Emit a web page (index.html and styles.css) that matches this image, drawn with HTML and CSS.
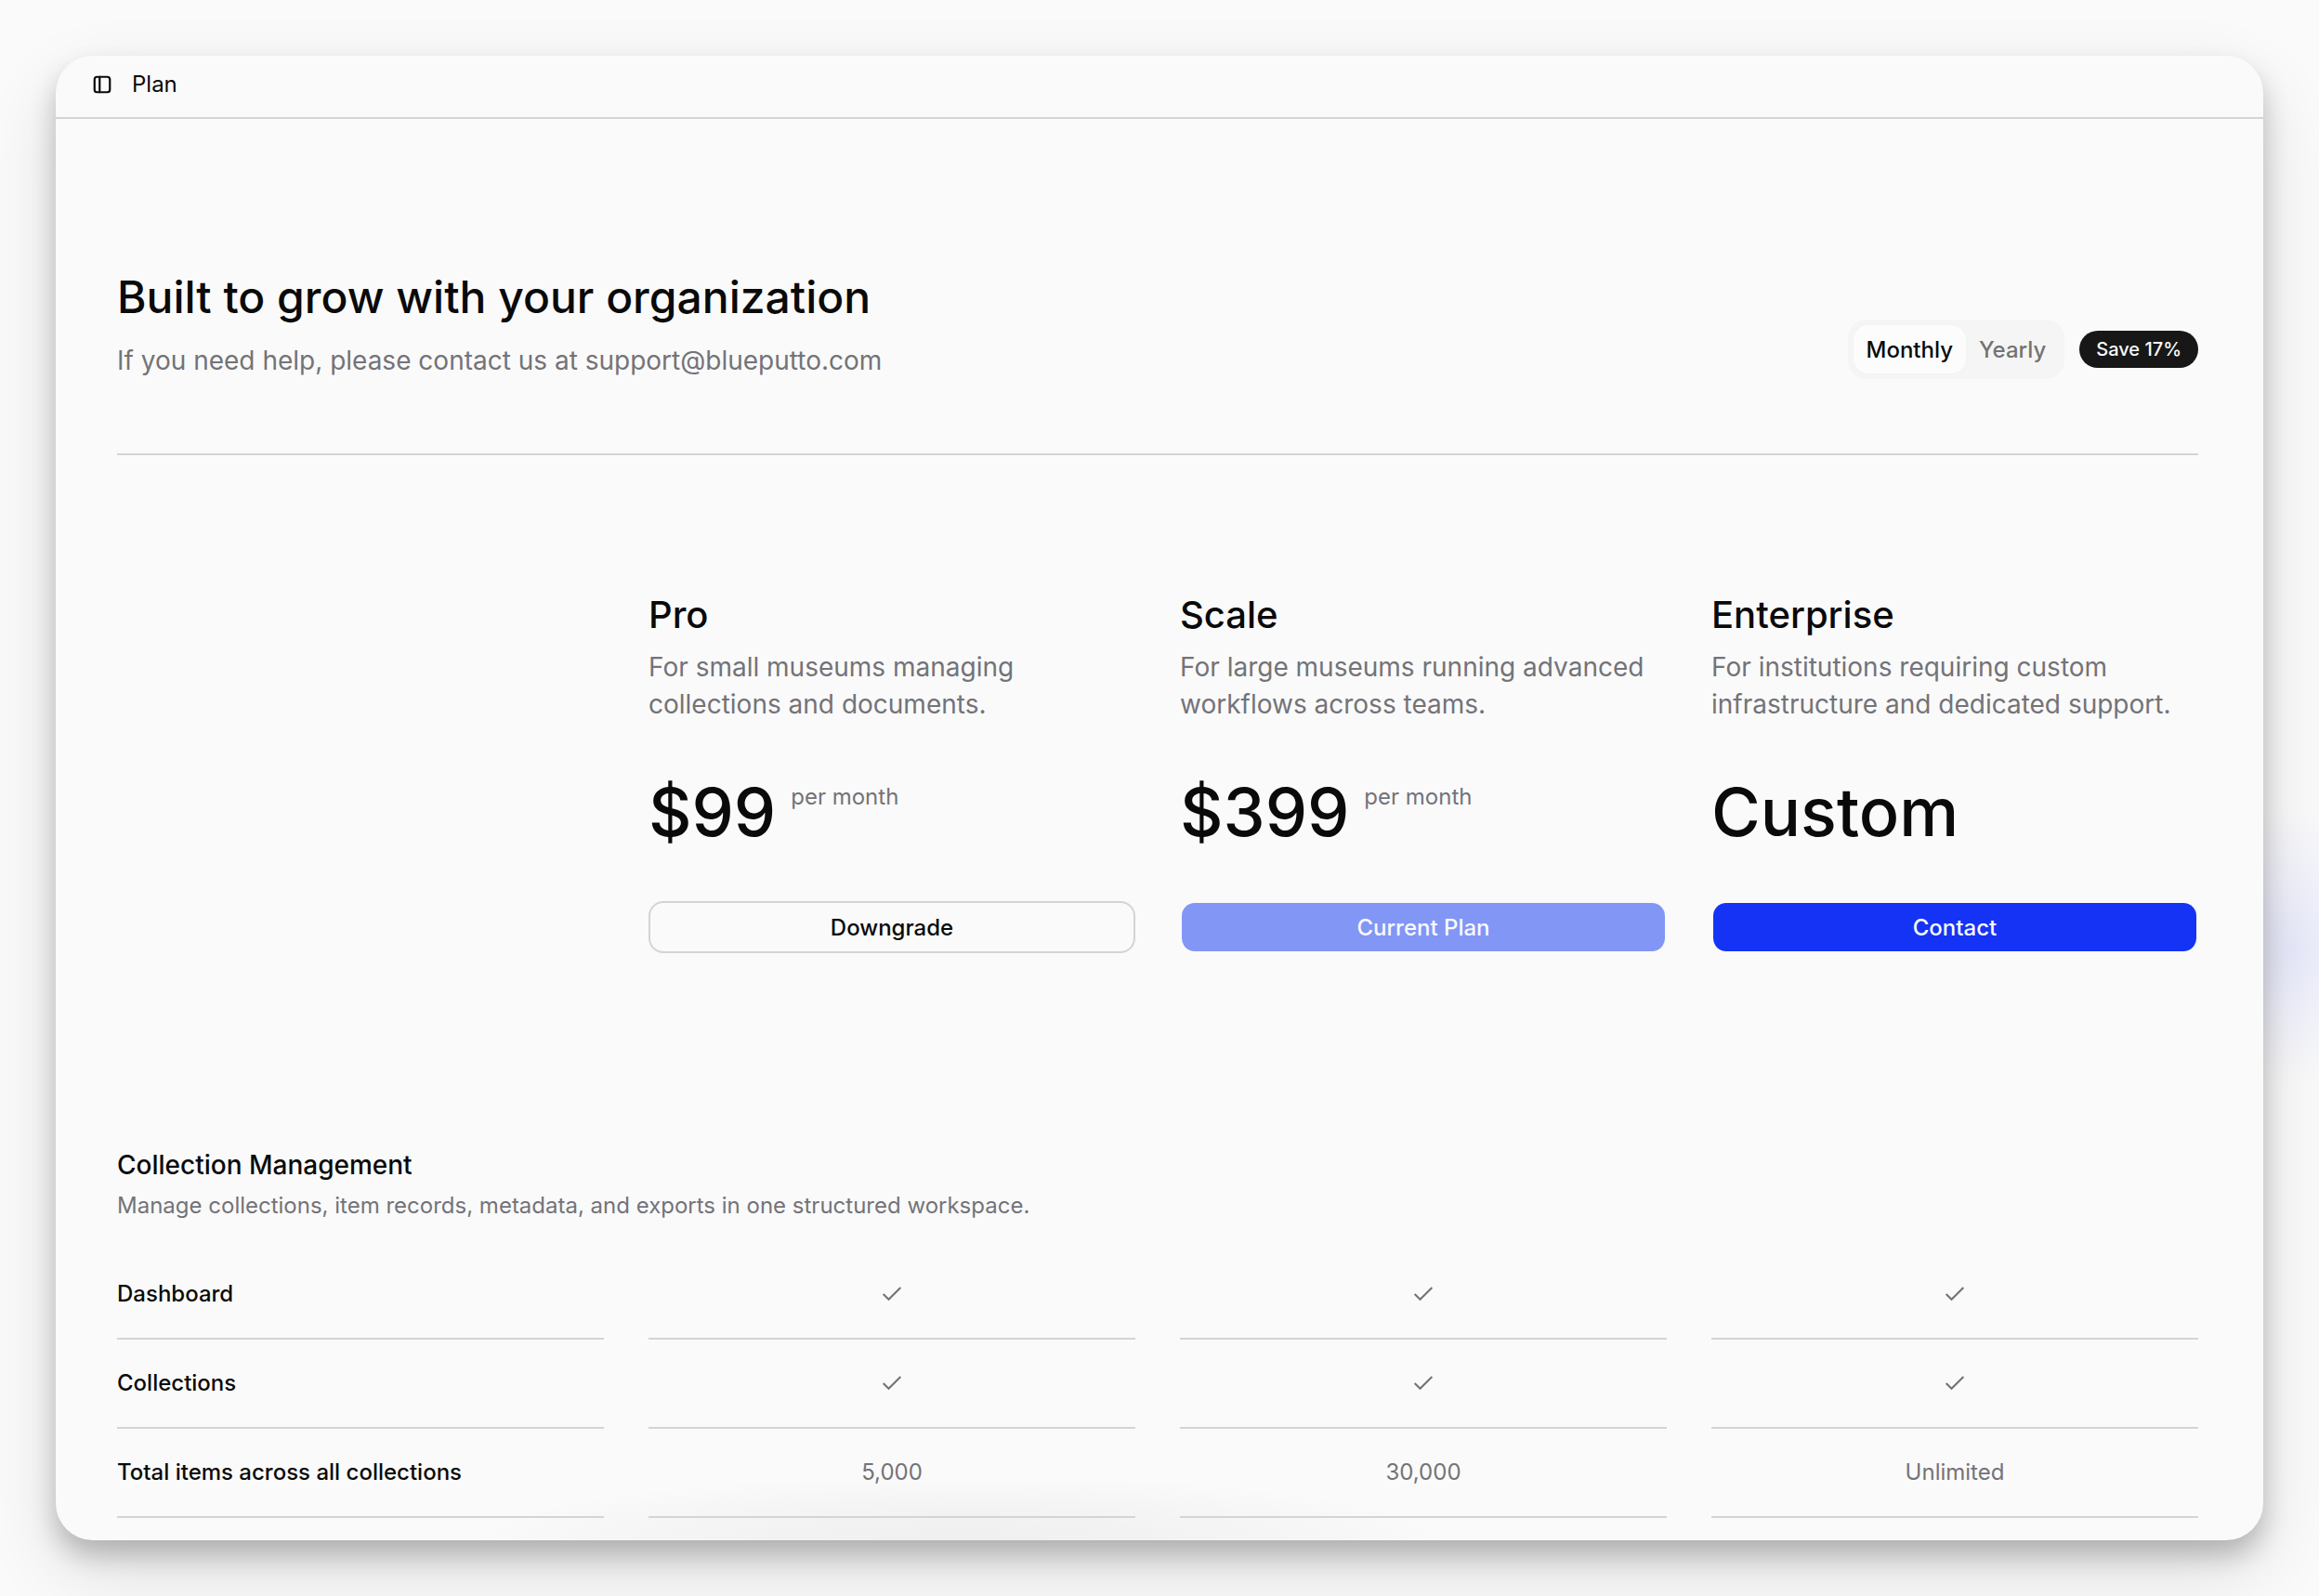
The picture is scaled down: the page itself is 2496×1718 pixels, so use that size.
FILE: index.html
```html
<!DOCTYPE html>
<html lang="en">
<head>
    <meta charset="UTF-8">
    <meta name="viewport" content="width=device-width, initial-scale=1.0">
    <title>Plan</title>
    <link rel="stylesheet" href="styles.css">
</head>
<body>

<svg class="sprite" aria-hidden="true">
    <symbol id="check" viewBox="0 0 24 24">
        <path d="M20 6 9 17l-5-5" fill="none" stroke="currentColor" stroke-width="1.8"/>
    </symbol>
</svg>

<div class="window">
    <header class="topbar">
        <button class="icon-button" type="button" aria-label="Toggle sidebar">
            <svg class="icon" viewBox="0 0 24 24" fill="none" stroke="currentColor" stroke-width="2.4" stroke-linecap="round" stroke-linejoin="round">
                <rect x="3" y="3" width="18" height="18" rx="3"/>
                <path d="M9 3v18"/>
            </svg>
        </button>
        <span class="topbar-title">Plan</span>
    </header>

    <main class="content">
        <section class="intro">
            <div class="intro-text">
                <h1>Built to grow with your organization</h1>
                <p>If you need help, please contact us at support@blueputto.com</p>
            </div>
            <div class="billing">
                <div class="tabs">
                    <button class="tab active" type="button" aria-pressed="true">Monthly</button>
                    <button class="tab" type="button" aria-pressed="false">Yearly</button>
                </div>
                <span class="badge">Save 17%</span>
            </div>
        </section>

        <section class="plans">
            <article class="plan">
                <h2>Pro</h2>
                <p class="plan-text">For small museums managing collections and documents.</p>
                <div class="price">
                    <span class="amount">$99</span>
                    <span class="period">per month</span>
                </div>
                <button class="btn btn-outline" type="button">Downgrade</button>
            </article>
            <article class="plan">
                <h2>Scale</h2>
                <p class="plan-text">For large museums running advanced workflows across teams.</p>
                <div class="price">
                    <span class="amount">$399</span>
                    <span class="period">per month</span>
                </div>
                <button class="btn btn-primary" type="button" disabled>Current Plan</button>
            </article>
            <article class="plan">
                <h2>Enterprise</h2>
                <p class="plan-text">For institutions requiring custom infrastructure and dedicated support.</p>
                <div class="price">
                    <span class="amount">Custom</span>
                </div>
                <button class="btn btn-primary" type="button">Contact</button>
            </article>
        </section>

        <section class="features">
            <h3>Collection Management</h3>
            <p>Manage collections, item records, metadata, and exports in one structured workspace.</p>
            <table class="feature-table">
                <tbody>
                    <tr>
                        <th scope="row">Dashboard</th>
                        <td><svg class="check" role="img" aria-label="Included"><use href="#check"/></svg></td>
                        <td><svg class="check" role="img" aria-label="Included"><use href="#check"/></svg></td>
                        <td><svg class="check" role="img" aria-label="Included"><use href="#check"/></svg></td>
                    </tr>
                    <tr>
                        <th scope="row">Collections</th>
                        <td><svg class="check" role="img" aria-label="Included"><use href="#check"/></svg></td>
                        <td><svg class="check" role="img" aria-label="Included"><use href="#check"/></svg></td>
                        <td><svg class="check" role="img" aria-label="Included"><use href="#check"/></svg></td>
                    </tr>
                    <tr>
                        <th scope="row">Total items across all collections</th>
                        <td>5,000</td>
                        <td>30,000</td>
                        <td>Unlimited</td>
                    </tr>
                </tbody>
            </table>
        </section>
    </main>
</div>

</body>
</html>
```

FILE: styles.css
```css
* {
    box-sizing: border-box;
}

body {
    margin: 0;
    padding: 60px;
    height: 100vh;
    background-color: #fafafa;
    /* soft blue glow at the right edge */
    background-image: radial-gradient(120px 150px at calc(100% - 30px) 1020px, rgba(190, 195, 255, 0.3), rgba(190, 195, 255, 0));
    color: #0a0a0a;
    font-family: Inter, sans-serif;
    font-size: 24px;
    line-height: 40px;
    overflow: hidden;
}

h1, h2, h3, p {
    margin: 0;
    font-weight: 500;
}

p {
    color: #737378;
    font-weight: 400;
}

button {
    font-family: inherit;
    font-size: 24px;
    font-weight: 500;
    color: inherit;
    cursor: pointer;
}

.sprite {
    display: none;
}

/* App window */
.window {
    height: 100%;
    background-color: #fafafa;
    /* faint shade along the lower edge */
    background-image: radial-gradient(540px 70px at 41% 100%, rgba(0, 0, 0, 0.045), rgba(0, 0, 0, 0.03) 40%, rgba(0, 0, 0, 0));
    border-radius: 40px;
    overflow: hidden;
    box-shadow: 0 16px 28px rgba(0, 0, 0, 0.22), 0 32px 80px rgba(0, 0, 0, 0.12);
}

.topbar {
    display: flex;
    align-items: center;
    gap: 20px;
    height: 68px;
    padding: 0 38px 4px;
    border-bottom: 2px solid #d4d4d4;
}

.icon-button {
    display: flex;
    padding: 0;
    border: none;
    background: none;
}

.icon {
    width: 24px;
    height: 22px;
}

.topbar-title {
    font-weight: 400;
}

.content {
    padding: 160px 70px 0 66px;
}

/* Title and billing switch */
.intro {
    display: flex;
    justify-content: space-between;
    align-items: flex-end;
    padding-bottom: 80px;
    border-bottom: 2px solid #d4d4d4;
}

.intro-text {
    display: flex;
    flex-direction: column;
    gap: 16px;
}

h1 {
    font-size: 48px;
    line-height: 64px;
}

.intro-text p,
.plan-text {
    font-size: 28px;
}

.billing {
    display: flex;
    align-items: center;
    gap: 16px;
}

.tabs {
    display: flex;
    height: 64px;
    padding: 6px;
    background: #f5f5f5;
    border-radius: 20px;
}

.tab {
    padding: 0 14px;
    border: none;
    border-radius: 16px;
    background: none;
    color: #737373;
}

.tab.active {
    background: #fcfcfc;
    color: #0a0a0a;
    box-shadow: 0 0 4px rgba(0, 0, 0, 0.02);
}

.badge {
    padding: 0 18px;
    border-radius: 20px;
    background: #171717;
    color: #fafafa;
    font-size: 20px;
    font-weight: 500;
}

/* Plan columns, the first one stays empty */
.plans {
    display: grid;
    grid-template-columns: repeat(4, 1fr);
    gap: 48px;
    padding: 144px 0 208px;
}

.plan:first-child {
    grid-column-start: 2;
}

h2 {
    margin-bottom: 8px;
    font-size: 40px;
    line-height: 56px;
}

.price {
    display: flex;
    gap: 16px;
    margin: 60px 0;
}

.amount {
    font-size: 72px;
    font-weight: 500;
    line-height: 72px;
}

.period {
    color: #737378;
}

.btn {
    width: 100%;
    height: 56px;
    border: 2px solid transparent;
    border-radius: 16px;
    background-clip: padding-box;
}

.btn-outline {
    background-color: #fafafa;
    border-color: #d4d4d4;
}

.btn-primary {
    background-color: #1433f5;
    color: #fafafa;
}

.btn-primary:disabled {
    background-color: #8296f6;
}

/* Feature comparison */
h3 {
    margin-bottom: 4px;
    font-size: 28px;
}

.feature-table {
    width: calc(100% + 96px);
    margin: 28px -48px 0;
    table-layout: fixed;
    border-spacing: 48px 0;
}

.feature-table th,
.feature-table td {
    height: 96px;
    padding: 0;
    border-bottom: 2px solid #d4d4d4;
    text-align: center;
}

.feature-table th {
    text-align: left;
    font-weight: 500;
}

.feature-table td {
    color: #737378;
}

.check {
    display: block;
    width: 28px;
    height: 28px;
    margin: 0 auto;
}
```
